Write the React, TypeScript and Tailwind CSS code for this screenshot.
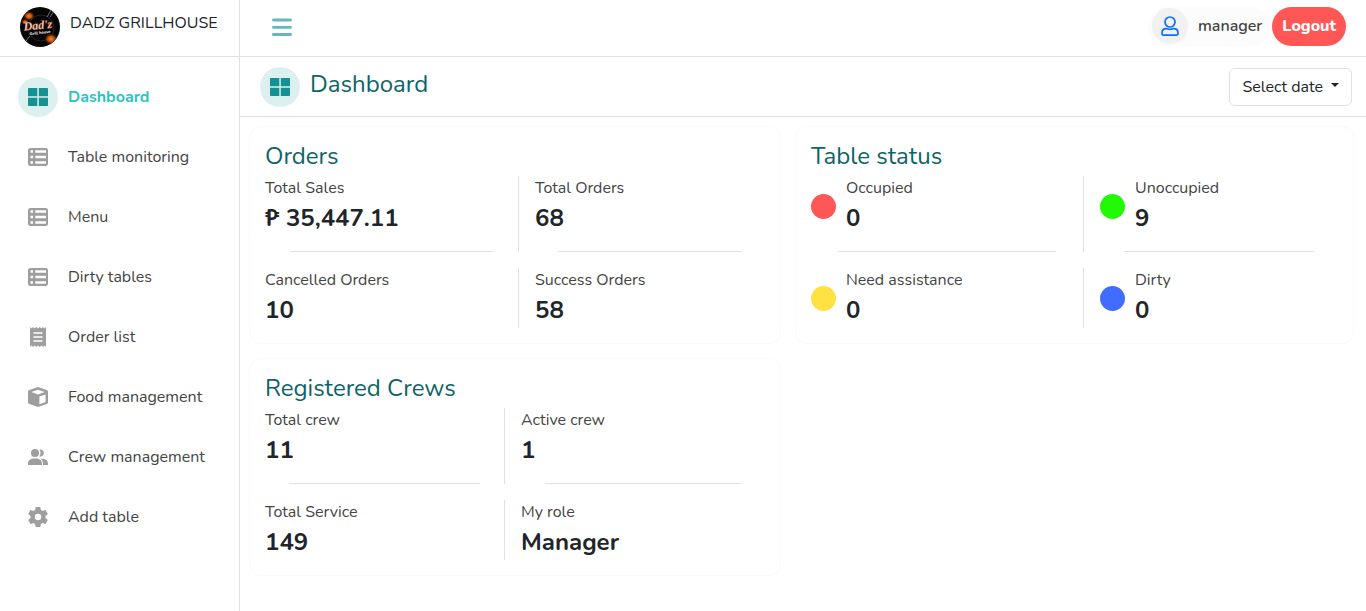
import React from "react";

type IconProps = { className?: string };

function GridIcon({ className = "" }: IconProps) {
  return (
    <svg width="20" height="18" viewBox="0 0 20 18" fill="currentColor" className={className} aria-hidden="true">
      <path d="M.8 0h8.500v8.300H0V.8A.8.8 0 0 1 .8 0zM10.800 0h8.400a.8.8 0 0 1 .8.8v7.500h-9.200zM0 9.700h9.300V18H.8a.8.8 0 0 1-.8-.8zM10.800 9.700H20v7.500a.8.8 0 0 1-.8.8h-8.400z" />
    </svg>
  );
}

function ListIcon() {
  return (
    <svg width="20" height="18" viewBox="0 0 20 18" fill="currentColor" fillRule="evenodd" aria-hidden="true">
      <path d="M2.500 0h15A2.500 2.500 0 0 1 20 2.500v13a2.500 2.500 0 0 1-2.500 2.500h-15A2.500 2.500 0 0 1 0 15.500v-13A2.500 2.500 0 0 1 2.500 0zM2.500 2.200v2.500H5V2.200zM7.300 2.200v2.500H18V2.200zM2.500 7.700v2.600H5V7.700zM7.300 7.700v2.600H18V7.700zM2.500 13.300v2.500H5v-2.500zM7.300 13.300v2.500H18v-2.500z" />
    </svg>
  );
}

function ReceiptIcon() {
  return (
    <svg width="16" height="20" viewBox="0 0 16 20" fill="currentColor" fillRule="evenodd" aria-hidden="true">
      <path d="M0 0l1.500 1.400L3 0l1.600 1.400L6.300 0 8 1.400 9.700 0l1.700 1.400L13 0l1.500 1.400L16 0v20l-1.500-1.400L13 20l-1.600-1.400L9.700 20 8 18.600 6.300 20l-1.700-1.400L3 20l-1.500-1.400L0 20zM3.500 5.300v1.400h9V5.300zM3.500 9.300v1.400h9V9.300zM3.500 13.300v1.400h9v-1.400z" />
    </svg>
  );
}

function BoxIcon() {
  return (
    <svg width="20" height="20" viewBox="0 0 20 20" fill="currentColor" fillRule="evenodd" aria-hidden="true">
      <path d="M9.200.3c.5-.2 1.100-.2 1.600 0l7.800 2.700c.9.300 1.400 1 1.400 1.800v10.400c0 .8-.5 1.500-1.300 1.800l-7.900 2.800c-.5.200-1.100.2-1.600 0L1.300 17C.5 16.700 0 16 0 15.200V4.800C0 4 .5 3.300 1.400 3zM10 2.700L3.300 5 10 7.400 16.700 5zM11.400 9.600v7.600l6.200-2.200V7.400z" />
    </svg>
  );
}

function PeopleIcon() {
  return (
    <svg width="20" height="16" viewBox="0 0 20 16" fill="currentColor" aria-hidden="true">
      <circle cx="7" cy="4" r="4" />
      <path d="M11.400.8A3.400 3.400 0 1 1 11.400 7.200 5.400 5.400 0 0 0 11.400.8zM0 16v-1.200C0 11.500 2.500 9.600 7 9.600s7 1.900 7 5.200V16zM12.600 9.700c4.800-.2 7.400 1.800 7.400 5V16h-5v-1.500c0-1.900-.8-3.600-2.400-4.800z" />
    </svg>
  );
}

function GearIcon() {
  return (
    <svg width="24" height="24" viewBox="0 0 24 24" fill="currentColor" aria-hidden="true">
      <path d="M19.430 12.980c.040-.320.070-.640.070-.980s-.030-.660-.070-.980l2.110-1.650c.190-.150.240-.420.120-.640l-2-3.460c-.120-.220-.390-.300-.610-.220l-2.490 1c-.520-.400-1.080-.730-1.690-.980l-.380-2.650A.488.488 0 0 0 14 2h-4c-.250 0-.460.180-.490.420l-.380 2.650c-.610.250-1.170.590-1.690.980l-2.490-1c-.230-.090-.490 0-.610.220l-2 3.460c-.130.220-.070.490.120.640l2.110 1.650c-.040.320-.070.650-.070.980s.030.660.070.980l-2.110 1.650c-.190.150-.240.420-.120.640l2 3.460c.120.220.390.300.610.220l2.490-1c.520.400 1.080.730 1.690.980l.380 2.650c.030.240.240.420.490.420h4c.250 0 .460-.180.490-.420l.380-2.650c.610-.250 1.170-.590 1.690-.980l2.490 1c.230.090.490 0 .610-.220l2-3.460c.120-.220.070-.490-.120-.640zM12 15.200a3.200 3.200 0 1 1 0-6.400 3.200 3.200 0 0 1 0 6.400z" />
    </svg>
  );
}

function UserIcon() {
  return (
    <svg width="18" height="20" viewBox="0 0 18 20" fill="none" stroke="currentColor" strokeWidth="1.700" strokeLinejoin="round" aria-hidden="true">
      <circle cx="9" cy="6" r="5" />
      <path d="M1 17c0-2.600 1.500-4.400 4.200-4.400 1.200 0 2.200.8 3.800.8s2.600-.8 3.800-.8c2.700 0 4.200 1.800 4.200 4.400v.8c0 .8-.5 1.300-1.200 1.300H2.200C1.500 19.100 1 18.600 1 17.800z" />
    </svg>
  );
}

function Logo() {
  return (
    <svg width="40" height="40" viewBox="0 0 40 40" role="img" aria-label="Dadz Grillhouse" className="shrink-0">
      <defs>
        <clipPath id="disc"><circle cx="20" cy="20" r="20" /></clipPath>
        <radialGradient id="ember">
          <stop offset="0" stopColor="#ff8a2a" />
          <stop offset=".5" stopColor="#c64f10" stopOpacity=".9" />
          <stop offset="1" stopColor="#3a1204" stopOpacity="0" />
        </radialGradient>
      </defs>
      <g clipPath="url(#disc)">
        <rect width="40" height="40" fill="#050505" />
        <circle cx="21" cy="21" r="13" fill="none" stroke="#3b3b3b" strokeWidth=".6" />
        <ellipse cx="9" cy="9" rx="6" ry="5" fill="url(#ember)" />
        <ellipse cx="5" cy="15" rx="4" ry="3" fill="url(#ember)" />
        <ellipse cx="31" cy="32" rx="7" ry="6" fill="url(#ember)" />
        <path d="M27 10l4-7M30 10l4-6M6 34l4-5" stroke="#8a8a8a" strokeWidth=".8" />
        <g transform="rotate(-5 20 20)" textAnchor="middle">
          <text x="18" y="22" fill="#f7dccd" stroke="#c9501f" strokeWidth=".3" fontFamily="Liberation Serif, serif" fontStyle="italic" fontWeight="700" fontSize="12">Dad'z</text>
        </g>
        <g transform="rotate(-7 20 26)" textAnchor="middle">
          <text x="20" y="27" fill="#f1f1f1" fontFamily="Nunito, sans-serif" fontWeight="800" fontSize="4">Grill house</text>
        </g>
      </g>
    </svg>
  );
}

const nav = [
  { label: "Dashboard", icon: <GridIcon />, active: true },
  { label: "Table monitoring", icon: <ListIcon /> },
  { label: "Menu", icon: <ListIcon /> },
  { label: "Dirty tables", icon: <ListIcon /> },
  { label: "Order list", icon: <ReceiptIcon /> },
  { label: "Food management", icon: <BoxIcon /> },
  { label: "Crew management", icon: <PeopleIcon /> },
  { label: "Add table", icon: <GearIcon /> },
];

type StatItem = { label: string; value: string; dot?: string };

function Stat({ item, left, top }: { item: StatItem; left: boolean; top: boolean }) {
  return (
    <div className={left ? "border-r border-[#dee2e6]" : "pl-4"}>
      <div className="flex items-center gap-[10px]">
        {item.dot && <span className={`size-[25px] shrink-0 rounded-full ${item.dot}`} />}
        <dl>
          <dt className="text-base leading-6 text-[#444444]">{item.label}</dt>
          <dd className="text-2xl leading-9 font-bold">{item.value}</dd>
        </dl>
      </div>
      {top && <hr className="mx-auto mt-[15px] w-4/5 border-[#dee2e6]" />}
    </div>
  );
}

function Card({ title, columns, items }: { title: string; columns: string; items: StatItem[] }) {
  return (
    <section className="rounded-xl border border-[#fafafa] p-[15px]">
      <h2 className="mb-[6px] text-2xl leading-7 text-[#0d6467]">{title}</h2>
      <div className={`grid gap-y-4 ${columns}`}>
        {items.map((item, i) => (
          <Stat key={item.label} item={item} left={i % 2 === 0} top={i < 2} />
        ))}
      </div>
    </section>
  );
}

export default function App() {
  return (
    <div className="flex min-h-screen bg-white font-['Nunito','Lato',sans-serif] text-base text-[#212529]">
      <aside className="w-60 shrink-0 border-r border-[#dee2e6]">
        <div className="flex h-[57px] gap-[10px] border-b border-[#dee2e6] pt-[7px] pl-5">
          <Logo />
          <span className="pt-1 leading-6 whitespace-nowrap">DADZ GRILLHOUSE</span>
        </div>
        <nav className="flex flex-col gap-5 pt-5 pl-[18px]">
          {nav.map((n) => (
            <a key={n.label} href="#" className={`flex h-10 items-center gap-[10px] ${n.active ? "font-bold text-[#29c5c5]" : "text-[#444444]"}`}>
              <span className={`flex size-10 items-center justify-center rounded-full ${n.active ? "bg-[#dcf0ef] text-[#149191]" : "text-[#9e9e9e]"}`}>{n.icon}</span>
              {n.label}
            </a>
          ))}
        </nav>
      </aside>

      <div className="min-w-0 flex-1">
        <header className="flex h-[57px] items-center justify-between border-b border-[#dee2e6] pr-5 pb-1 pl-8">
          <button type="button" aria-label="Toggle menu" className="mt-[2px] text-[#66b9b9]">
            <svg width="20" height="18" viewBox="0 0 20 18" fill="none" stroke="currentColor" strokeWidth="2.800" strokeLinecap="round" aria-hidden="true">
              <path d="M1.400 2h17.200M1.400 9.300h17.200M1.400 16.500h17.200" />
            </svg>
          </button>
          <div className="flex items-center">
            <div className="flex h-[39px] items-center gap-[10px] rounded-full bg-[#fcfcfc] pr-[10px] pl-1">
              <span className="flex size-9 items-center justify-center rounded-full bg-[#f1f1f1] text-[#0d6efd]"><UserIcon /></span>
              <span className="font-semibold text-[#444444]">manager</span>
            </div>
            <button type="button" className="h-[39px] rounded-full bg-[#ff5656] px-[10px] font-extrabold text-white">Logout</button>
          </div>
        </header>

        <div className="flex h-[60px] items-center justify-between border-b border-[#dee2e6] pr-[14px] pl-5">
          <div className="flex gap-[10px]">
            <span className="flex size-10 items-center justify-center rounded-full bg-[#dcf0ef] text-[#149191]"><GridIcon /></span>
            <h1 className="pt-[2px] text-2xl leading-[30px] text-[#0d6467]">Dashboard</h1>
          </div>
          <button type="button" className="flex h-[38px] items-center gap-2 rounded-md border border-[#dee2e6] px-3">
            Select date
            <svg width="8" height="4" viewBox="0 0 8 4" fill="currentColor" className="mb-1" aria-hidden="true"><path d="M0 0h8L4 4z" /></svg>
          </button>
        </div>

        <main className="grid grid-cols-[532fr_559fr] gap-[14px] py-[9px] pr-3 pl-[9px]">
          <Card
            title="Orders"
            columns="grid-cols-[254fr_246fr]"
            items={[
              { label: "Total Sales", value: "₱ 35,447.11" },
              { label: "Total Orders", value: "68" },
              { label: "Cancelled Orders", value: "10" },
              { label: "Success Orders", value: "58" },
            ]}
          />
          <Card
            title="Table status"
            columns="grid-cols-[273fr_254fr]"
            items={[
              { label: "Occupied", value: "0", dot: "bg-[#ff5656]" },
              { label: "Unoccupied", value: "9", dot: "bg-[#22f905]" },
              { label: "Need assistance", value: "0", dot: "bg-[#ffe142]" },
              { label: "Dirty", value: "0", dot: "bg-[#426cff]" },
            ]}
          />
          <Card
            title="Registered Crews"
            columns="grid-cols-[240fr_260fr]"
            items={[
              { label: "Total crew", value: "11" },
              { label: "Active crew", value: "1" },
              { label: "Total Service", value: "149" },
              { label: "My role", value: "Manager" },
            ]}
          />
        </main>
      </div>
    </div>
  );
}
